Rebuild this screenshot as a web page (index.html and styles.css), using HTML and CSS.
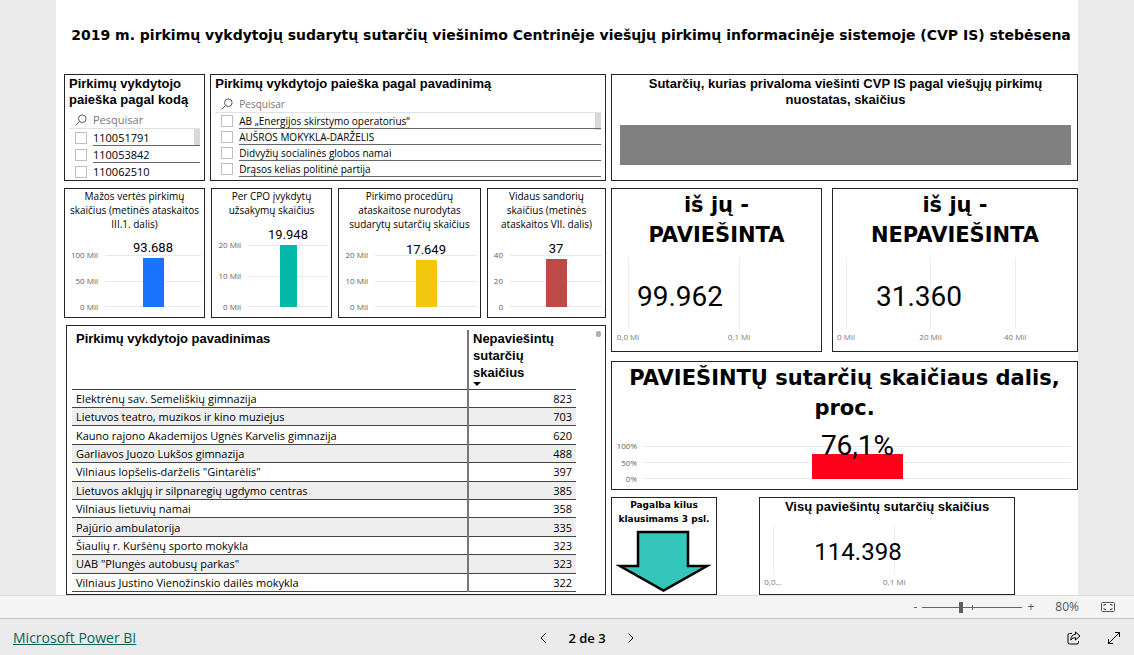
FILE: index.html
```html
<!DOCTYPE html>
<html lang="lt">
<head>
<meta charset="utf-8">
<meta name="viewport" content="width=device-width, initial-scale=1">
<title>Sutarčių viešinimo stebėsena</title>
<link rel="stylesheet" href="styles.css">
</head>
<body>
<main class="report">
  <h1 class="report-title">2019 m. pirkimų vykdytojų sudarytų sutarčių viešinimo Centrinėje viešųjų pirkimų informacinėje sistemoje (CVP IS) stebėsena</h1>
  <div class="columns">
    <div class="col-left">
      <div class="slicers">
        <section class="card slicer slicer-code">
          <h2 class="heading">Pirkimų vykdytojo paieška pagal kodą</h2>
          <label class="search">
            <svg class="search-icon" viewBox="0 0 12 12"><circle cx="7.3" cy="4.7" r="3.8"/><path d="M4.5 7.5 0.6 11.4"/></svg>
            <input type="text" placeholder="Pesquisar" aria-label="Pesquisar kodą">
          </label>
          <div class="options">
            <label class="option"><input type="checkbox"><span>110051791</span></label>
            <label class="option"><input type="checkbox"><span>110053842</span></label>
            <label class="option"><input type="checkbox"><span>110062510</span></label>
          </div>
        </section>
        <section class="card slicer slicer-name">
          <h2 class="heading">Pirkimų vykdytojo paieška pagal pavadinimą</h2>
          <label class="search">
            <svg class="search-icon" viewBox="0 0 12 12"><circle cx="7.3" cy="4.7" r="3.8"/><path d="M4.5 7.5 0.6 11.4"/></svg>
            <input type="text" placeholder="Pesquisar" aria-label="Pesquisar pavadinimą">
          </label>
          <div class="options">
            <label class="option"><input type="checkbox"><span>AB „Energijos skirstymo operatorius“</span></label>
            <label class="option"><input type="checkbox"><span>AUŠROS MOKYKLA-DARŽELIS</span></label>
            <label class="option"><input type="checkbox"><span>Didvyžių socialinės globos namai</span></label>
            <label class="option"><input type="checkbox"><span>Drąsos kelias politinė partija</span></label>
          </div>
        </section>
      </div>

      <div class="charts">
        <section class="card column-card">
          <h2 class="caption">Mažos vertės pirkimų skaičius (metinės ataskaitos III.1. dalis)</h2>
          <div class="column-chart">
            <div class="y-axis">
              <span>100 Mil</span><span>50 Mil</span><span>0 Mil</span></div>
            <div class="plot"><div class="gridlines"><i></i><i></i><i></i></div>
              <div class="column blue"><span class="value">93.688</span><div class="bar" style="height:94%"></div></div></div>
          </div>
        </section>
        <section class="card column-card">
          <h2 class="caption">Per CPO įvykdytų užsakymų skaičius</h2>
          <div class="column-chart tall">
            <div class="y-axis medium"><span>20 Mil</span><span>10 Mil</span><span>0 Mil</span></div>
            <div class="plot"><div class="gridlines"><i></i><i></i><i></i></div>
              <div class="column teal"><span class="value">19.948</span><div class="bar" style="height:99.7%"></div></div></div>
          </div>
        </section>
        <section class="card column-card">
          <h2 class="caption">Pirkimo procedūrų ataskaitose nurodytas sudarytų sutarčių skaičius</h2>
          <div class="column-chart">
            <div class="y-axis medium"><span>20 Mil</span><span>10 Mil</span><span>0 Mil</span></div>
            <div class="plot"><div class="gridlines"><i></i><i></i><i></i></div>
              <div class="column yellow"><span class="value">17.649</span><div class="bar" style="height:91%"></div></div></div>
          </div>
        </section>
        <section class="card column-card">
          <h2 class="caption">Vidaus sandorių skaičius (metinės ataskaitos VII. dalis)</h2>
          <div class="column-chart">
            <div class="y-axis short"><span>40</span><span>20</span><span>0</span></div>
            <div class="plot"><div class="gridlines"><i></i><i></i><i></i></div>
              <div class="column red"><span class="value">37</span><div class="bar" style="height:93%"></div></div></div>
          </div>
        </section>
      </div>

      <section class="card table-card">
        <table class="data">
          <thead><tr><th scope="col">Pirkimų vykdytojo pavadinimas</th><th scope="col">Nepaviešintų sutarčių skaičius<svg class="sort" viewBox="0 0 8 4"><path d="M0 0h8L4 4z"/></svg></th></tr></thead>
          <tbody>
            <tr><td>Elektrėnų sav. Semeliškių gimnazija</td><td>823</td></tr>
            <tr><td>Lietuvos teatro, muzikos ir kino muziejus</td><td>703</td></tr>
            <tr><td>Kauno rajono Akademijos Ugnės Karvelis gimnazija</td><td>620</td></tr>
            <tr><td>Garliavos Juozo Lukšos gimnazija</td><td>488</td></tr>
            <tr><td>Vilniaus lopšelis-darželis "Gintarėlis"</td><td>397</td></tr>
            <tr><td>Lietuvos aklųjų ir silpnaregių ugdymo centras</td><td>385</td></tr>
            <tr><td>Vilniaus lietuvių namai</td><td>358</td></tr>
            <tr><td>Pajūrio ambulatorija</td><td>335</td></tr>
            <tr><td>Šiaulių r. Kuršėnų sporto mokykla</td><td>323</td></tr>
            <tr><td>UAB "Plungės autobusų parkas"</td><td>323</td></tr>
            <tr><td>Vilniaus Justino Vienožinskio dailės mokykla</td><td>322</td></tr>
          </tbody>
        </table>
        <span class="thumb"></span>
      </section>
    </div>

    <div class="col-right">
      <section class="card total-card">
        <h2 class="heading">Sutarčių, kurias privaloma viešinti CVP IS pagal viešųjų pirkimų nuostatas, skaičius</h2>
        <div class="band"></div>
      </section>
      <div class="split">
        <section class="card number-card">
          <h2 class="big-heading">iš jų - PAVIEŠINTA</h2>
          <div class="bar-chart published">
            <div class="x-axis"><span>0,0 Mi</span><span>0,1 Mi</span></div>
            <strong class="number">99.962</strong>
          </div>
        </section>
        <section class="card number-card">
          <h2 class="big-heading">iš jų - NEPAVIEŠINTA</h2>
          <div class="bar-chart unpublished">
            <div class="x-axis"><span>0 Mil</span><span>20 Mil</span><span>40 Mil</span></div>
            <strong class="number">31.360</strong>
          </div>
        </section>
      </div>
      <section class="card percent-card">
        <h2 class="big-heading wide">PAVIEŠINTŲ sutarčių skaičiaus dalis, proc.</h2>
        <div class="column-chart percent">
          <div class="y-axis"><span>100%</span><span>50%</span><span>0%</span></div>
          <div class="plot"><div class="gridlines"><i></i><i></i><i></i></div>
            <div class="column"><span class="value">76,1%</span><div class="bar" style="height:76.1%"></div></div></div>
        </div>
      </section>
      <div class="bottom">
        <section class="card help-card">
          <h2 class="small-heading">Pagalba kilus klausimams 3 psl.</h2>
          <svg class="arrow" viewBox="0 0 96 62"><path d="M22 2H72V36H91L47.500 60.500 4 36H22Z"/></svg>
        </section>
        <section class="card all-card">
          <h2 class="heading">Visų paviešintų sutarčių skaičius</h2>
          <div class="bar-chart all">
            <div class="x-axis"><span>0,0...</span><span>0,1 Mi</span></div>
            <strong class="number">114.398</strong>
          </div>
        </section>
      </div>
    </div>
  </div>
</main>

<div class="zoom-bar">
  <button type="button" aria-label="Zoom out">-</button>
  <input class="zoom-range" type="range" min="0" max="100" value="38" aria-label="Zoom">
  <button type="button" aria-label="Zoom in">+</button>
  <span class="zoom-value">80%</span>
  <button type="button" aria-label="Fit to page"><svg class="fit" viewBox="0 0 14 10"><rect x=".5" y=".5" width="13" height="9" rx="1"/><path d="M3 4V2.500H5M9 2.500H11V4M11 6V7.500H9M5 7.500H3V6"/></svg></button>
</div>
<footer class="footer">
  <a href="#">Microsoft Power BI</a>
  <nav class="pager">
    <button type="button" aria-label="Previous page"><svg class="chev" viewBox="0 0 6 10"><path d="M5.500 .5 1 5 5.500 9.500"/></svg></button>
    <span>2 de 3</span>
    <button type="button" aria-label="Next page"><svg class="chev" viewBox="0 0 6 10"><path d="M.5 .5 5 5 .5 9.500"/></svg></button>
  </nav>
  <div class="actions">
    <button type="button" aria-label="Share"><svg class="action-icon" viewBox="0 0 14 14"><path d="M5 2.500H2.500Q1 2.500 1 4V11.500Q1 13 2.500 13H10Q11.500 13 11.500 11.500V10"/><path d="M8.500 1 13 5 8.500 9V6.700Q5.500 6.500 3.800 9 4 3.800 8.500 3.300Z"/></svg></button>
    <button type="button" aria-label="Full screen"><svg class="action-icon" viewBox="0 0 14 14"><path d="M1.500 12.500 12.500 1.500M8 1.500H12.500V6M1.500 8V12.500H6"/></svg></button>
  </div>
</footer>
</body>
</html>
```
FILE: styles.css
```css
* { box-sizing: border-box; }

body {
  margin: 0;
  min-height: 100vh;
  display: flex;
  flex-direction: column;
  background: #eaeaea;
  color: #000;
  font: 11px/16px "Open Sans", "Noto Sans", sans-serif;
}

h1, h2 { margin: 0; }

button {
  display: flex;
  align-items: center;
  justify-content: center;
  padding: 0;
  border: 0;
  background: none;
  color: inherit;
  font: inherit;
}

svg { display: block; fill: none; stroke: currentColor; }

.report {
  flex: 1;
  margin: 0 56px;
  padding-left: 8px;
  background: #fff;
}

.report-title {
  padding: 24px 0 28px;
  text-align: center;
  font: 700 14px/22px "DejaVu Sans", Verdana, sans-serif;
}

.columns {
  display: grid;
  grid-template-columns: 542fr 467fr;
  column-gap: 5px;
}

.col-left, .col-right { display: flex; flex-direction: column; min-width: 0; }

.card { border: 1px solid #252423; background: #fff; min-width: 0; }

.heading { font: 700 13px/16px "Liberation Sans", Arial, sans-serif; }

/* Slicers */
.slicers {
  display: grid;
  grid-template-columns: 141fr 395fr;
  gap: 5px;
  height: 107px;
}

.slicer {
  display: flex;
  flex-direction: column;
  padding: 1px 4px 0;
}

.search {
  display: flex;
  align-items: center;
  gap: 6px;
  padding: 3px 0 0 6px;
  border-bottom: 1px solid #e1e1e1;
}

.search-icon { width: 12px; height: 12px; color: #555; }

.search input {
  flex: 1;
  min-width: 0;
  height: 17px;
  padding: 0;
  border: 0;
  background: none;
  font: inherit;
}

.search input::placeholder { color: #777; opacity: 1; }

.slicer-name .search input { font-size: 10px; }

.options {
  flex: 1;
  background: linear-gradient(#d9d9d9, #d9d9d9) right top / 6px 17px no-repeat;
}

.option { display: flex; gap: 6px; padding-left: 6px; }

.option input {
  appearance: none;
  width: 12px;
  height: 12px;
  margin: 3px 0 0;
  border: 1px solid #bdbdc4;
  background: #fff;
}

.option span { flex: 1; height: 17px; border-bottom: 1px solid #666; line-height: 17px; }
.slicer-code .option:last-child span { border-bottom: 0; }
.slicer-name .option input { margin-top: 2px; }
.slicer-name .option span { height: 16px; font-size: 10px; line-height: 16px; }

/* Small column charts */
.charts {
  display: grid;
  grid-template-columns: 141fr 121fr 143fr 119fr;
  gap: 6px;
  height: 130px;
  margin-top: 7px;
}

.column-card { display: flex; flex-direction: column; }

.caption { padding: 0 3px; text-align: center; font-size: 10px; font-weight: 400; line-height: 14px; }

.column-chart { display: flex; gap: 7px; height: 62px; margin: auto 3px 5px 0; }
.column-chart.tall { height: 72px; }

.y-axis {
  display: flex;
  flex-direction: column;
  justify-content: space-between;
  width: 33px;
  text-align: right;
  color: #605e5c;
  font-size: 8px;
  line-height: 10px;
  white-space: nowrap;
}

.y-axis.medium { width: 29px; }
.y-axis.short { width: 15px; }

.plot { flex: 1; display: grid; margin: 5px 0; }
.gridlines, .column { grid-area: 1 / 1; min-height: 0; }
.gridlines { display: flex; flex-direction: column; justify-content: space-between; }
.gridlines i { height: 1px; background: #e8e8e8; }

.column { display: flex; flex-direction: column; align-items: center; justify-content: flex-end; }
.bar { width: 21px; flex: none; }
.value { font: 13px/20px Roboto, sans-serif; margin-top: -20px; }
.blue .bar { background: #1a73ff; }
.teal .bar { width: 17px; background: #01b8aa; }
.yellow .bar { background: #f2c80f; }
.red .bar { background: #be4a47; }

/* Table */
.table-card {
  display: flex;
  align-items: flex-start;
  gap: 20px;
  height: 270px;
  margin: 7px 0 0 2px;
  padding: 4px 4px 0 5px;
}

.data { flex: 1; height: 262px; border-collapse: collapse; }

.data th {
  height: 59px;
  padding: 0 4px;
  text-align: left;
  vertical-align: top;
  font: 700 13px/17px "Liberation Sans", Arial, sans-serif;
}

.data th + th { width: 108px; }
.data td { padding: 0 4px; line-height: 17px; border-top: 1px solid #444; }
.data tr:last-child td { border-bottom: 1px solid #444; }
.data th + th, .data td + td { border-left: 2px solid #777; }
.data td + td { text-align: right; }
.data tbody tr:nth-child(even) { background: #eee; }
.sort { width: 8px; height: 4px; margin-top: 1px; fill: #000; stroke: none; }
.thumb { width: 5px; height: 6px; margin-top: 1px; border-radius: 2px; background: #b0b0b0; }

/* Right column */
.total-card { height: 107px; padding: 1px 6px 0 8px; text-align: center; }
.total-card .heading { padding: 0 20px; }
.band { height: 40px; margin-top: 17px; background: #808080; }

.split {
  display: grid;
  grid-template-columns: 211fr 246fr;
  gap: 10px;
  height: 164px;
  margin-top: 7px;
}

.number-card { display: flex; flex-direction: column; justify-content: space-between; }

.big-heading { padding: 1px 30px 0; text-align: center; font: 700 21px/30px "DejaVu Sans", Verdana, sans-serif; }
.big-heading.wide { padding: 1px 10px 0; }

.bar-chart { display: grid; height: 87px; margin-bottom: 6px; }
.x-axis, .number { grid-area: 1 / 1; }
.x-axis { display: flex; justify-content: space-between; }

.x-axis span {
  display: flex;
  align-items: flex-end;
  justify-content: center;
  width: 26px;
  color: #777;
  background: linear-gradient(#ececec, #ececec) center top / 1px calc(100% - 16px) no-repeat;
  font-size: 8px;
  line-height: 16px;
  white-space: nowrap;
}

.number { align-self: center; font: 400 28px/32px Roboto, sans-serif; }
.published .x-axis { width: 67%; padding-left: 3px; }
.published .number { padding: 0 0 10px 25px; }
.unpublished .x-axis { width: 80%; }
.unpublished .number { padding: 0 0 10px 43px; }

.percent-card { display: flex; flex-direction: column; height: 129px; margin-top: 9px; }
.column-chart.percent { height: 43px; margin-right: 6px; }
.percent .y-axis { width: 25px; }
.percent .bar { width: 91px; background: #ff001a; }
.percent .value { margin: -30px 0 -8px; z-index: 1; font-size: 28px; line-height: 32px; }

.bottom {
  display: grid;
  grid-template-columns: 106fr 256fr 21fr;
  gap: 42px;
  height: 98px;
  margin-top: 7px;
}

.small-heading { text-align: center; font: 700 9px/14px "DejaVu Sans", Verdana, sans-serif; }
.help-card { display: flex; flex-direction: column; align-items: center; }
.arrow { width: 96px; height: 62px; margin-top: 4px; fill: #34c6bb; stroke: #000; stroke-width: 2.500; }
.all-card { display: flex; flex-direction: column; justify-content: space-between; padding-top: 1px; text-align: center; }
.bar-chart.all { height: 65px; margin-bottom: 4px; }
.all .x-axis { width: 58%; }
.all .number { padding: 0 58px 12px 0; font-size: 24px; }

/* Status bar and footer */
.zoom-bar {
  display: flex;
  align-items: center;
  justify-content: flex-end;
  gap: 5px;
  height: 24px;
  padding-right: 19px;
  border-top: 1px solid #dedede;
  border-bottom: 1px solid #c4c4c4;
  background: #f4f4f4;
  color: #555;
  font-size: 12px;
}

.zoom-range {
  appearance: none;
  width: 100px;
  height: 12px;
  margin: 0;
  background:
    linear-gradient(#666, #666) 50% 50% / 1px 5px no-repeat,
    linear-gradient(#666, #666) 50% 50% / 100% 1px no-repeat;
}

.zoom-range::-webkit-slider-thumb { appearance: none; width: 4px; height: 11px; background: #605e5c; }
.zoom-value { margin: 0 17px 0 16px; }
.fit { width: 14px; height: 10px; }

.footer {
  display: grid;
  grid-template-columns: 1fr auto 1fr;
  align-items: center;
  height: 36px;
  padding: 2px 13px 0;
}

.footer a { color: #0f6259; font-size: 14px; }
.pager { display: flex; align-items: center; gap: 22px; padding-left: 40px; font-size: 13px; font-weight: 600; }
.chev { width: 6px; height: 10px; }
.actions { display: flex; justify-content: flex-end; gap: 26px; }
.action-icon { width: 14px; height: 14px; }
```
